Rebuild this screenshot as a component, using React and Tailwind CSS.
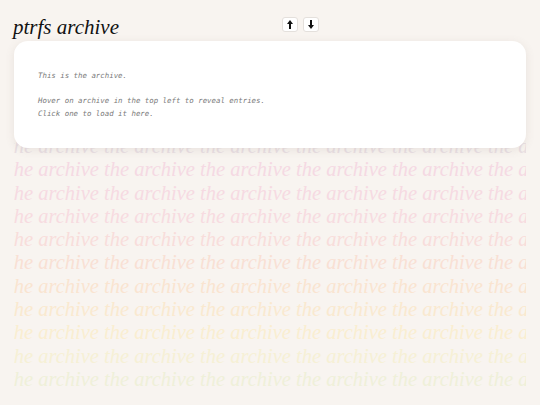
import React from 'react'

const rows = [
  'text-[#e9dfe3]',
  'text-[#f5d9e3]',
  'text-[#f6dae2]',
  'text-[#f7dbe0]',
  'text-[#f8dddb]',
  'text-[#f9e0d4]',
  'text-[#fae4d0]',
  'text-[#fae9cf]',
  'text-[#faeed1]',
  'text-[#f6f0d5]',
  'text-[#eff0d9]',
]

const phrase = 'the archive '.repeat(8)

function Arrow({ down }) {
  return (
    <svg width="6" height="9" viewBox="0 0 6 9" className={down ? 'rotate-180' : ''}>
      <path d="M3 0 L6 4 L4 4 L4 9 L2 9 L2 4 L0 4 Z" fill="#111" />
    </svg>
  )
}

function NavButton({ down }) {
  return (
    <button className="flex h-[15px] w-[16px] items-center justify-center rounded-[3px] border border-[#e4e0dc] bg-white">
      <Arrow down={down} />
    </button>
  )
}

export default function App() {
  return (
    <div className="h-[405px] w-[540px] overflow-hidden bg-[#f8f4f0] px-[14px]">
      <header className="flex h-[41px] items-start">
        <h1 className="-ml-px mt-[14px] w-[269px] font-['Liberation_Serif',serif] text-[21px] leading-[26px] italic text-[#111]">
          ptrfs archive
        </h1>
        <div className="mt-[17px] flex gap-[5px]">
          <NavButton />
          <NavButton down />
        </div>
      </header>

      <main className="relative z-10 h-[107px] rounded-[14px] bg-white px-[24px] pt-[29px] shadow-[0_2px_10px_rgba(120,100,90,0.12)]">
        <div className="font-['DejaVu_Sans_Mono','Liberation_Mono',monospace] text-[7.4px] leading-[12.8px] italic text-[#7a7a7a]">
          <p>This is the archive.</p>
          <p className="mt-[12.4px]">Hover on archive in the top left to reveal entries.</p>
          <p>Click one to load it here.</p>
        </div>
      </main>

      <div className="-mt-[13px] overflow-hidden font-['Liberation_Serif',serif] text-[20.5px] leading-[23.3px] italic">
        {rows.map((c, i) => (
          <div key={i} className={`-ml-[6px] whitespace-pre ${c}`}>
            {phrase}
          </div>
        ))}
      </div>
    </div>
  )
}
